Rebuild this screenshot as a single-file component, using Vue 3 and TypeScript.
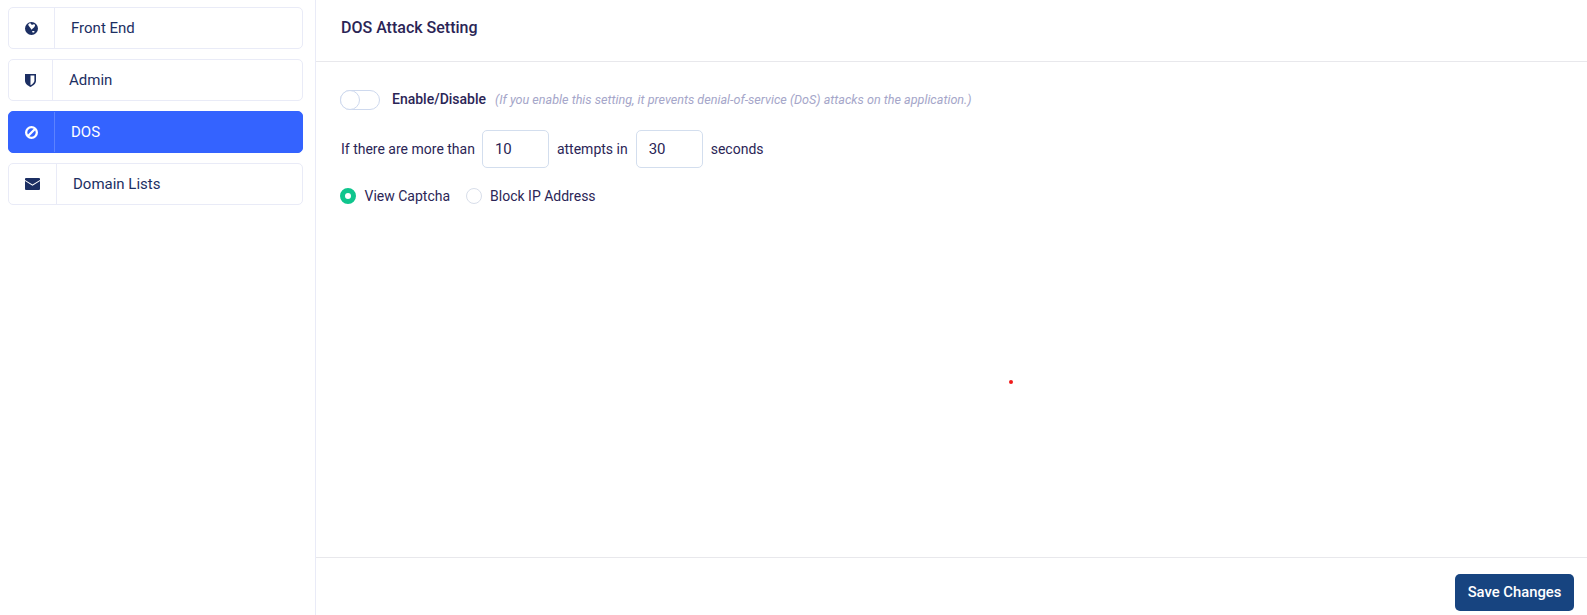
<template>
  <div class="page">
    <aside class="sidebar">
      <a
        v-for="item in menu"
        :key="item.label"
        class="menu-item"
        :class="{ 'menu-item--active': item.active }"
      >
        <span class="menu-icon">
          <svg :viewBox="`0 0 ${item.width} ${item.height}`" :width="item.width" :height="item.height" fill="currentColor">
            <path :d="item.path" />
          </svg>
        </span>
        <span class="menu-label">{{ item.label }}</span>
      </a>
    </aside>

    <main class="content">
      <header class="content-header">DOS Attack Setting</header>

      <section class="content-body">
        <div class="toggle-row">
          <span class="toggle"><span class="toggle-knob"></span></span>
          <span class="toggle-label">Enable/Disable</span>
          <span class="toggle-hint">(If you enable this setting, it prevents denial-of-service (DoS) attacks on the application.)</span>
        </div>

        <div class="attempts-row">
          <span class="attempts-lead">If there are more than</span>
          <input v-model="attempts" class="num-input" type="text" />
          <span>attempts in</span>
          <input v-model="seconds" class="num-input" type="text" />
          <span>seconds</span>
        </div>

        <div class="radio-row">
          <label
            v-for="option in options"
            :key="option"
            class="radio"
            @click="selected = option"
          >
            <span class="radio-dot" :class="{ 'radio-dot--on': selected === option }"></span>
            {{ option }}
          </label>
        </div>

        <span class="red-dot"></span>
      </section>

      <footer class="content-footer">
        <button class="save-btn" type="button">Save Changes</button>
      </footer>
    </main>
  </div>
</template>

<script setup lang="ts">
import { ref } from 'vue';

const attempts = ref('10');
const seconds = ref('30');
const options = ['View Captcha', 'Block IP Address'];
const selected = ref('View Captcha');

const menu = [
  {
    label: 'Front End',
    width: 13,
    height: 13,
    // dark disc, land masses wound the other way so they cut out
    path: 'M6.5 0a6.5 6.5 0 0 1 0 13a6.5 6.5 0 0 1 0-13z M5 1.2C3.8 1.2 3 2.2 3.4 3.2 4 4.6 5.6 5.6 6.6 7.8 7.6 6.6 9.4 5.4 10 3.8 10.3 2.6 9.2 1.8 8.2 2.4 7.4 2.9 6.4 2.9 6.2 2.2 6 1.6 5.6 1.2 5 1.2z M7 9.8C7.1 10.6 8.6 10.8 9.4 10.2 9.8 9.6 9.2 9 8.4 9 7.6 9 7 9.2 7 9.8z',
  },
  {
    label: 'Admin',
    width: 11,
    height: 13,
    // flat topped shield, right half hollow
    path: 'M0 0H11V6.8C11 9.6 8.2 11.8 5.5 13 2.8 11.8 0 9.6 0 6.8z M5.5 1.6V11.3C7.4 10.3 9.4 8.7 9.4 6.8V1.6z',
  },
  {
    label: 'DOS',
    active: true,
    width: 13,
    height: 13,
    // ring, inner hole wound the other way, then the slash
    path: 'M6.5 0a6.5 6.5 0 0 1 0 13a6.5 6.5 0 0 1 0-13z M6.5 2.3a4.2 4.2 0 0 0 0 8.4a4.2 4.2 0 0 0 0-8.4z M2 9.4L9.4 2 11 3.6 3.6 11z',
  },
  {
    label: 'Domain Lists',
    width: 15,
    height: 12,
    path: 'M1 0H14a1 1 0 0 1 1 1V1.9L7.5 6.6 0 1.9V1a1 1 0 0 1 1-1z M0 3 7.5 7.8 15 3V11a1 1 0 0 1-1 1H1a1 1 0 0 1-1-1z',
  },
];
</script>

<style>
html,
body {
  margin: 0;
  background: #fff;
}
</style>

<style scoped>
.page {
  display: flex;
  height: 615px;
  font-family: Roboto, sans-serif;
  font-size: 14px;
  color: #2b2556;
  background: #fff;
  overflow: hidden;
}
.sidebar {
  width: 316px;
  flex-shrink: 0;
  box-sizing: border-box;
  padding: 7px 12px 0 8px;
  display: flex;
  flex-direction: column;
  gap: 10px;
  border-right: 1px solid #e9ebf7;
}
.menu-item {
  display: flex;
  align-items: stretch;
  height: 42px;
  box-sizing: border-box;
  border: 1px solid #e9ebf7;
  border-radius: 5px;
  color: #1c2f63;
  background: #fff;
}
.menu-item--active {
  background: #3463ff;
  border-color: #3463ff;
  color: #fff;
}
.menu-icon {
  display: flex;
  align-items: center;
  padding: 0 16px;
  border-right: 1px solid #e9ebf7;
}
.menu-item--active .menu-icon {
  border-right-color: #5c82ff;
}
.menu-label {
  display: flex;
  align-items: center;
  padding-left: 16px;
  font-size: 15px;
}
.content {
  flex: 1;
  display: flex;
  flex-direction: column;
  min-width: 0;
}
.content-header {
  height: 62px;
  box-sizing: border-box;
  display: flex;
  align-items: center;
  padding: 0 25px 7px;
  border-bottom: 1px solid #e8e8ec;
  font-size: 16px;
  font-weight: 500;
}
.content-body {
  position: relative;
  flex: 1;
  padding: 28px 24px 0;
}
.toggle-row {
  display: flex;
  align-items: center;
  height: 20px;
}
.toggle {
  position: relative;
  width: 40px;
  height: 20px;
  box-sizing: border-box;
  border: 1px solid #ced9ee;
  border-radius: 10px;
  margin-right: 12px;
}
.toggle-knob {
  position: absolute;
  left: -1px;
  top: -1px;
  width: 20px;
  height: 20px;
  box-sizing: border-box;
  border: 1px solid #ced9ee;
  border-radius: 50%;
  background: #fff;
}
.toggle-label {
  font-weight: 500;
  margin-right: 9px;
  padding-bottom: 2px;
}
.toggle-hint {
  font-size: 12.6px;
  font-style: italic;
  color: #a5a6c9;
  padding-bottom: 2px;
}
.attempts-row {
  display: flex;
  align-items: center;
  gap: 8px;
  margin-top: 20px;
  padding-left: 1px;
}
.attempts-lead {
  margin-right: -1px;
}
.num-input {
  width: 67px;
  height: 38px;
  box-sizing: border-box;
  border: 1px solid #d3deee;
  border-radius: 5px;
  padding: 0 12px;
  font-family: inherit;
  font-size: 15px;
  color: #2b2556;
  background: #fff;
  outline: none;
}
.radio-row {
  display: flex;
  align-items: center;
  gap: 15.5px;
  margin-top: 20px;
}
.radio {
  display: flex;
  align-items: center;
  gap: 8.5px;
}
.radio-dot {
  width: 16px;
  height: 16px;
  box-sizing: border-box;
  border: 1px solid #d8deea;
  border-radius: 50%;
  background: #fff;
}
.radio-dot--on {
  border: 5px solid #0fc58d;
}
.red-dot {
  position: absolute;
  left: 693px;
  top: 318px;
  width: 4px;
  height: 4px;
  border-radius: 50%;
  background: #f01a1a;
}
.content-footer {
  height: 58px;
  box-sizing: border-box;
  display: flex;
  justify-content: flex-end;
  padding: 16px 13px 0 0;
  border-top: 1px solid #e8e8ec;
}
.save-btn {
  height: 37px;
  width: 119px;
  border: none;
  border-radius: 5px;
  padding: 0 0 2px;
  background: #174480;
  color: #fff;
  font-family: inherit;
  font-size: 14.8px;
  font-weight: 500;
}
</style>
